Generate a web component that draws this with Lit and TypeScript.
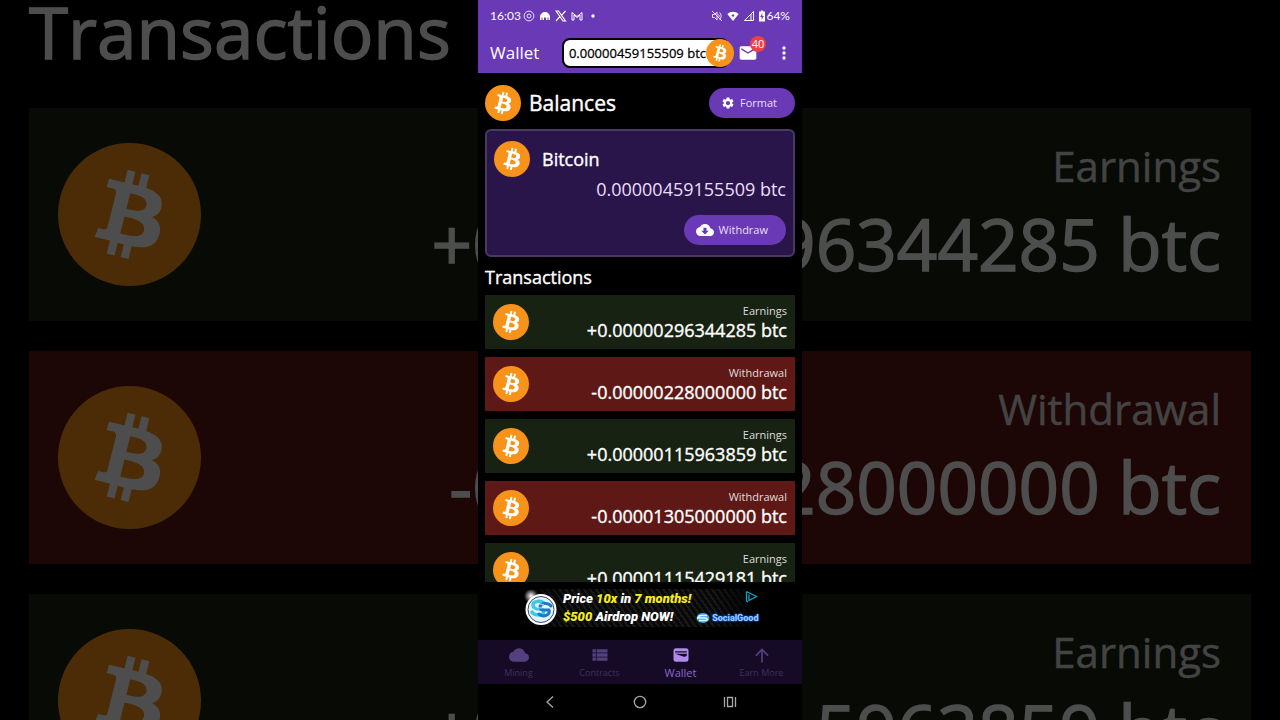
import { LitElement, html, css, svg, nothing } from "lit";
import { customElement, property } from "lit/decorators.js";
import { classMap } from "lit/directives/class-map.js";

interface Transaction {
  kind: "Earnings" | "Withdrawal";
  amount: string;
}

const TRANSACTIONS: Transaction[] = [
  { kind: "Earnings", amount: "+0.00000296344285 btc" },
  { kind: "Withdrawal", amount: "-0.00000228000000 btc" },
  { kind: "Earnings", amount: "+0.00000115963859 btc" },
  { kind: "Withdrawal", amount: "-0.00001305000000 btc" },
  { kind: "Earnings", amount: "+0.00001115429181 btc" },
];

const BALANCE = "0.00000459155509 btc";

const TABS = [
  { label: "Mining", icon: svg`<path d="M19.35 10.04C18.67 6.59 15.64 4 12 4 9.11 4 6.6 5.64 5.35 8.04 2.34 8.36 0 10.91 0 14c0 3.31 2.69 6 6 6h13c2.76 0 5-2.24 5-5 0-2.64-2.05-4.78-4.65-4.96z"/>` },
  { label: "Contracts", icon: svg`<path d="M3 5h4v4H3zM8 5h13v4H8zM3 10h4v4H3zM8 10h13v4H8zM3 15h4v4H3zM8 15h13v4H8z"/>` },
  { label: "Wallet", icon: svg`<path fill-rule="evenodd" d="M6 4h12a3 3 0 0 1 3 3v10a3 3 0 0 1-3 3H6a3 3 0 0 1-3-3V7a3 3 0 0 1 3-3zM5 7.500v1.500h14V7.500zM5 10.500l9.500 3.200c2.500.8 4.500-.2 4.500-1.700v-1.500z"/>` },
  { label: "Earn More", icon: svg`<path d="M4 12l1.410 1.410L11 7.830V21h2V7.830l5.580 5.590L20 12l-8-8-8 8z"/>` },
];

@customElement("coin-icon")
export class CoinIcon extends LitElement {
  static styles = css`
    :host { display: block; flex: none; }
    .coin { display: block; width: 100%; height: 100%; }
  `;
  render() {
    return html`<svg class="coin" viewBox="0 0 32 32" aria-hidden="true">
      <circle cx="16" cy="16" r="16" fill="#f7931a" />
      <path fill="#fff" d="M23.189 14.02c.314-2.096-1.283-3.223-3.465-3.975l.708-2.84-1.728-.43-.69 2.765c-.454-.114-.92-.22-1.385-.326l.695-2.783L15.596 6l-.708 2.839c-.376-.086-.746-.17-1.104-.26l.002-.009-2.384-.595-.46 1.846s1.283.294 1.256.312c.7.175.826.638.805 1.006l-.806 3.235c.048.012.11.03.18.057l-.183-.045-1.13 4.532c-.086.212-.303.531-.793.41.018.025-1.256-.313-1.256-.313l-.858 1.978 2.25.561c.418.105.828.215 1.231.318l-.715 2.872 1.727.43.708-2.84c.472.127.93.245 1.378.357l-.706 2.828 1.728.43.715-2.866c2.948.558 5.164.333 6.097-2.333.752-2.146-.037-3.385-1.588-4.192 1.13-.26 1.98-1.003 2.207-2.538zm-3.95 5.538c-.533 2.147-4.148.986-5.32.695l.95-3.805c1.172.293 4.929.872 4.37 3.11zm.535-5.569c-.487 1.953-3.495.96-4.47.717l.86-3.45c.975.243 4.118.696 3.61 2.733z" />
    </svg>`;
  }
}

@customElement("transaction-list")
export class TransactionList extends LitElement {
  @property({ type: Boolean }) large = false;

  static styles = css`
    :host { display: block; }
    .title { margin: 0; padding: 9px 0 7px; font-size: 18px; line-height: 22px; font-weight: 400; color: #fff; -webkit-text-stroke: 0.02em; }
    .rows { list-style: none; margin: 0; padding: 0; display: flex; flex-direction: column; gap: 8px; }
    .row { display: flex; align-items: center; justify-content: space-between; min-height: 54px; padding: 0 8px; background: #172212; }
    .out { background: #5e1916; }
    .coin { width: 36px; height: 36px; }
    .text { display: flex; flex-direction: column; text-align: right; white-space: nowrap; color: #fff; }
    .kind { font-size: 11px; line-height: 15px; color: #dedede; }
    .amount { font-size: 18px; line-height: 24px; -webkit-text-stroke: 0.02em; }
    .large .title { padding: 0 0 44px; font-size: 71px; line-height: 64px; }
    .large .rows { gap: 30px; }
    .large .row { min-height: 213px; padding: 0 30px 0 29px; }
    .large .coin { width: 143px; height: 143px; }
    .large .kind { font-size: 42px; line-height: 58px; -webkit-text-stroke: 0.01em; }
    .large .amount { font-size: 71px; line-height: 98px; }
  `;

  render() {
    return html`<section class=${classMap({ large: this.large })}>
      <h2 class="title">Transactions</h2>
      <ul class="rows">
        ${TRANSACTIONS.map(
          (t) => html`<li class=${classMap({ row: true, out: t.kind === "Withdrawal" })}>
            <coin-icon class="coin"></coin-icon>
            <div class="text"><span class="kind">${t.kind}</span><span class="amount">${t.amount}</span></div>
          </li>`
        )}
      </ul>
    </section>`;
  }
}

@customElement("ad-banner")
export class AdBanner extends LitElement {
  static styles = css`
    :host { display: flex; justify-content: center; padding: 7px 0 13px; }
    .ad {
      display: grid; grid-template-columns: auto 1fr auto; align-items: center; column-gap: 5px;
      width: 240px; height: 38px; box-sizing: border-box; padding: 0 4px; color: #fff; text-decoration: none;
      background: linear-gradient(90deg, #000, transparent 20%, transparent 80%, #000), repeating-linear-gradient(55deg, #080808 0 3px, #191919 3px 5px);
    }
    .logo { width: 34px; height: 36px; }
    .copy { display: flex; flex-direction: column; font: italic 900 13px/18px Roboto, sans-serif; white-space: nowrap; }
    .hot { color: #f6ee1c; }
    .side { display: flex; flex-direction: column; align-items: flex-end; justify-content: space-between; height: 36px; }
    .choice { width: 13px; height: 13px; }
    .brand { display: flex; align-items: center; gap: 2px; }
    .mark { width: 14px; height: 12px; }
    .name { font: 700 9px/16px Roboto, sans-serif; color: #8fd0ff; text-shadow: 0 0 1px #2560e8, 0 0 2px #2560e8, 0 0 2px #2560e8; }
  `;
  render() {
    return html`<a class="ad" href="#ad">
      <svg class="logo" viewBox="0 0 34 36" aria-hidden="true">
        <defs><radialGradient id="glow"><stop offset="0" stop-color="#fff" /><stop offset="1" stop-color="#fff" stop-opacity="0" /></radialGradient></defs>
        <circle cx="7" cy="6" r="7" fill="url(#glow)" />
        <circle cx="17" cy="19.500" r="15.500" fill="#fff" />
        <circle cx="17" cy="19.500" r="13" fill="#dff4fb" stroke="#3c4a66" stroke-width="1" />
        <g fill="none" stroke-linecap="round">
          <path stroke="#3cc9e4" stroke-width="3.500" d="M20 13c-4-3-11-2-11 2s5 4 8 4 4 6-1 6-7-1-8-3" />
          <path stroke="#1d78cc" stroke-width="3" d="M27 16c-3-4-11-3-11 1s5 3 9 3c2 5-6 8-10 4" />
          <path stroke="#fff" stroke-width=".8" d="M20 15c-4-2-8-1-8 1s4 2 6 2M25 17c-3-2-6-1-6 0" />
        </g>
      </svg>
      <span class="copy">
        <span>Price <span class="hot">10x</span> in <span class="hot">7 months!</span></span>
        <span><span class="hot">$500</span> Airdrop NOW!</span>
      </span>
      <span class="side">
        <svg class="choice" viewBox="0 0 13 13" fill="none" stroke="#1aa3c0" stroke-width="1.300" aria-hidden="true">
          <path d="M1.500 1.500v10M1.500 1.500L11.500 6.500 4 10.500V4.500M1.500 11.500H3" />
        </svg>
        <span class="brand">
          <svg class="mark" viewBox="0 0 14 12" fill="none" aria-hidden="true">
            <ellipse cx="7" cy="6" rx="6.500" ry="5" fill="#3f9bf5" />
            <path stroke="#e8f8ff" stroke-width="1.400" d="M11 3.500H5c-3 0-3 2.500 0 2.500h4c3 0 3 2.500 0 2.500H3M1 6h6" />
          </svg>
          <span class="name">SocialGood</span>
        </span>
      </span>
    </a>`;
  }
}

@customElement("app-root")
export class AppRoot extends LitElement {
  static styles = css`
    :host {
      display: grid; grid-template: 100vh / minmax(0, 1fr); overflow: hidden; background: #000; color: #fff;
      font-family: "Open Sans", "Noto Sans", sans-serif;
    }
    .backdrop, .phone { grid-area: 1 / 1; min-height: 0; overflow: hidden; }
    .backdrop { padding: 0 29px; opacity: 0.3; }
    .phone { position: relative; justify-self: center; height: 100%; aspect-ratio: 9 / 20; display: flex; flex-direction: column; background: #000; }
    button { font: inherit; color: inherit; border: 0; margin: 0; padding: 0; background: none; }

    .top { background: #6a39b5; padding: 0 8px 0 12px; }
    .status { display: flex; align-items: center; height: 32px; font: 400 12px/16px Lato, sans-serif; }
    .apps { display: flex; align-items: center; gap: 4px; margin-left: 2px; }
    .signals { display: flex; align-items: center; gap: 4px; margin-left: auto; margin-right: 4px; }
    .s12 { width: 12px; height: 12px; flex: none; }
    .s8 { width: 6px; height: 12px; flex: none; }
    .charge { display: flex; align-items: center; gap: 1px; }

    .bar { display: flex; align-items: center; height: 41px; }
    .heading { margin: 0; font-size: 17px; line-height: 24px; font-weight: 400; }
    .pill {
      display: flex; align-items: center; margin-left: auto; height: 30px; padding-left: 5px;
      border: 2px solid #000; border-radius: 8px; background: #fff; color: #000;
      font-size: 13px; -webkit-text-stroke: 0.02em; white-space: nowrap; box-sizing: border-box;
    }
    .pillcoin { width: 28px; height: 28px; margin-right: -7px; }
    .mail { position: relative; display: flex; margin-left: 9px; }
    .mailicon { width: 20px; height: 20px; }
    .badge {
      position: absolute; left: 12px; top: -7px; width: 16px; height: 16px; border-radius: 8px;
      background: #ec3f46; font-size: 11px; line-height: 16px; text-align: center;
    }
    .more { display: flex; margin-left: 16px; }
    .moreicon { width: 20px; height: 20px; }

    .content { flex: 1; min-height: 0; overflow: hidden; padding: 12px 7px 0; }
    .balances { display: flex; align-items: center; gap: 8px; }
    .coin { width: 36px; height: 36px; }
    .h1 { margin: 0; font-size: 21px; line-height: 28px; font-weight: 400; -webkit-text-stroke: 0.02em; }
    .action {
      display: flex; align-items: center; gap: 5px; height: 30px; margin-left: auto; padding: 0 18px 0 12px;
      border-radius: 15px; background: #6a39b5; color: #eadffa; font-size: 11px; line-height: 16px;
    }
    .gear { width: 14px; height: 14px; }
    .cloud { width: 18px; height: 18px; }
    .card {
      margin-top: 8px; padding: 10px 7px; border: 2px solid #493a63; border-radius: 6px; background: #2a154b;
      display: flex; flex-direction: column;
    }
    .asset { display: flex; align-items: center; gap: 12px; }
    .h3 { margin: 0; font-size: 18px; line-height: 24px; font-weight: 400; -webkit-text-stroke: 0.02em; }
    .value { margin: 0 0 14px; text-align: right; font-size: 18px; line-height: 24px; color: #eadffa; }

    .nav { display: grid; grid-template-columns: repeat(4, 1fr); height: 44px; background: #150b26; }
    .tab {
      display: flex; flex-direction: column; align-items: center; justify-content: center;
      color: #40305d; font-size: 9px; line-height: 15px; text-decoration: none; white-space: nowrap;
    }
    .tabicon { width: 20px; height: 20px; fill: #55407f; }
    .active { color: #8f68cc; font-size: 11px; }
    .active .tabicon { fill: #b08ae8; }
    .system { display: grid; grid-template-columns: repeat(3, 90px); justify-content: center; height: 36px; }
    .key { display: flex; align-items: center; justify-content: center; }
    .keyicon { width: 14px; height: 14px; fill: none; stroke: #a8a8a8; stroke-width: 1.3; }
  `;

  render() {
    return html`
      <div class="backdrop" aria-hidden="true"><transaction-list large></transaction-list></div>
      <main class="phone">
        <header class="top">
          <div class="status">
            <span>16:03</span>
            <span class="apps">
              <svg class="s12" viewBox="0 0 12 12" fill="none" stroke="#e9dffa"><circle cx="6" cy="6" r="4.900" /><circle cx="6" cy="6" r="2" /></svg>
              <svg class="s12" viewBox="0 0 12 12" fill="#fff"><path d="M1 10V7a5 5 0 0 1 10 0v3H9.500V7.500h-1V10H7V7.500H5V10H3.500V7.500h-1V10z" /></svg>
              <svg class="s12" viewBox="0 0 12 12" fill="none" stroke="#fff" stroke-width="1.200"><path d="M1 1h2.500l7 10H8zM10.500 1L6.800 5.200M1 11l4-4.600" /></svg>
              <svg class="s12" viewBox="0 0 12 12" fill="none" stroke="#fff"><path d="M1 10V2.500L6 6.500l5-4V10H9V5L6 7.500 3 5v5z" /></svg>
              <svg class="s12" viewBox="0 0 12 12" fill="#fff"><circle cx="6" cy="6" r="1.700" /></svg>
            </span>
            <span class="signals">
              <svg class="s12" viewBox="0 0 12 12" fill="none" stroke="#e9dffa"><path d="M1.500 4.500v3h2L6 10V2L3.500 4.500zM1 1l10 10M7.500 4.500a2 2 0 0 1 0 3M8.500 2.500a4.500 4.500 0 0 1 0 7" /></svg>
              <svg class="s12" viewBox="0 0 12 12"><path fill="#fff" d="M6 11L.3 4a8.500 8.500 0 0 1 11.400 0z" /><path fill="#6a39b5" d="M6 4l1.500 1.500L6 7 4.500 5.500z" /></svg>
              <svg class="s12" viewBox="0 0 12 12" fill="none" stroke="#fff"><path d="M10.500 1.500v9h-9zM8 4v6.500" /></svg>
              <span class="charge">
                <svg class="s8" viewBox="0 0 6 12"><path fill="#fff" d="M2 .5h2v1h2v10H0v-10h2z" /><path fill="#6a39b5" d="M3.300 3L1.200 7h1.500v3l2.100-4H3.300z" /></svg>
                <span>64%</span>
              </span>
            </span>
          </div>
          <div class="bar">
            <h1 class="heading">Wallet</h1>
            <button class="pill">${BALANCE}<coin-icon class="pillcoin"></coin-icon></button>
            <button class="mail" aria-label="Messages">
              <svg class="mailicon" viewBox="0 0 24 24" fill="#fff"><path d="M20 4H4c-1.100 0-2 .9-2 2v12c0 1.100.9 2 2 2h16c1.100 0 2-.9 2-2V6c0-1.100-.9-2-2-2zm0 4l-8 5-8-5V6l8 5 8-5z" /></svg>
              <span class="badge">40</span>
            </button>
            <button class="more" aria-label="More">
              <svg class="moreicon" viewBox="0 0 20 20" fill="#fff"><circle cx="10" cy="5" r="1.700" /><circle cx="10" cy="10" r="1.700" /><circle cx="10" cy="15" r="1.700" /></svg>
            </button>
          </div>
        </header>

        <div class="content">
          <div class="balances">
            <coin-icon class="coin"></coin-icon>
            <h2 class="h1">Balances</h2>
            <button class="action">
              <svg class="gear" viewBox="0 0 24 24" fill="#fff" aria-hidden="true"><path d="M19.140 12.940c.04-.3.060-.61.060-.94 0-.32-.02-.64-.07-.94l2.030-1.580c.18-.14.23-.41.12-.61l-1.920-3.320c-.12-.22-.37-.29-.59-.22l-2.390.96c-.5-.38-1.030-.7-1.620-.94l-.36-2.540c-.04-.24-.24-.41-.48-.41h-3.840c-.24 0-.43.17-.47.41l-.36 2.540c-.59.24-1.130.57-1.620.94l-2.390-.96c-.22-.08-.47 0-.59.22L2.740 8.870c-.12.21-.08.47.12.61l2.030 1.580c-.05.3-.09.63-.09.94s.02.64.07.94l-2.030 1.580c-.18.14-.23.41-.12.61l1.920 3.320c.12.22.37.29.59.22l2.390-.96c.5.38 1.030.7 1.620.94l.36 2.540c.05.24.24.41.48.41h3.840c.24 0 .44-.17.47-.41l.36-2.540c.59-.24 1.130-.56 1.620-.94l2.390.96c.22.080.47 0 .59-.22l1.920-3.320c.12-.22.07-.47-.12-.61l-2.010-1.580zM12 15.600c-1.980 0-3.600-1.620-3.600-3.600s1.620-3.600 3.600-3.600 3.600 1.620 3.600 3.600-1.620 3.600-3.600 3.600z" /></svg>
              Format
            </button>
          </div>
          <section class="card">
            <div class="asset"><coin-icon class="coin"></coin-icon><h3 class="h3">Bitcoin</h3></div>
            <p class="value">${BALANCE}</p>
            <button class="action">
              <svg class="cloud" viewBox="0 0 24 24" fill="#fff" aria-hidden="true"><path d="M19.350 10.040C18.670 6.590 15.640 4 12 4 9.110 4 6.600 5.640 5.350 8.040 2.340 8.360 0 10.910 0 14c0 3.310 2.690 6 6 6h13c2.760 0 5-2.240 5-5 0-2.640-2.050-4.780-4.650-4.960zM17 13l-5 5-5-5h3V9h4v4h3z" /></svg>
              Withdraw
            </button>
          </section>
          <transaction-list></transaction-list>
        </div>

        <ad-banner></ad-banner>

        <nav class="nav">
          ${TABS.map(
            (t) => html`<a class=${classMap({ tab: true, active: t.label === "Wallet" })} href="#" aria-current=${t.label === "Wallet" ? "page" : nothing}>
              <svg class="tabicon" viewBox="0 0 24 24" aria-hidden="true">${t.icon}</svg>${t.label}
            </a>`
          )}
        </nav>
        <div class="system">
          <button class="key" aria-label="Back"><svg class="keyicon" viewBox="0 0 14 14"><path d="M10 1.500L4 7l6 5.500" /></svg></button>
          <button class="key" aria-label="Home"><svg class="keyicon" viewBox="0 0 14 14"><circle cx="7" cy="7" r="5.700" /></svg></button>
          <button class="key" aria-label="Recent apps"><svg class="keyicon" viewBox="0 0 14 14"><path d="M1.500 2v10M12.500 2v10M4.500 2.500h5v9h-5z" /></svg></button>
        </div>
      </main>
    `;
  }
}
